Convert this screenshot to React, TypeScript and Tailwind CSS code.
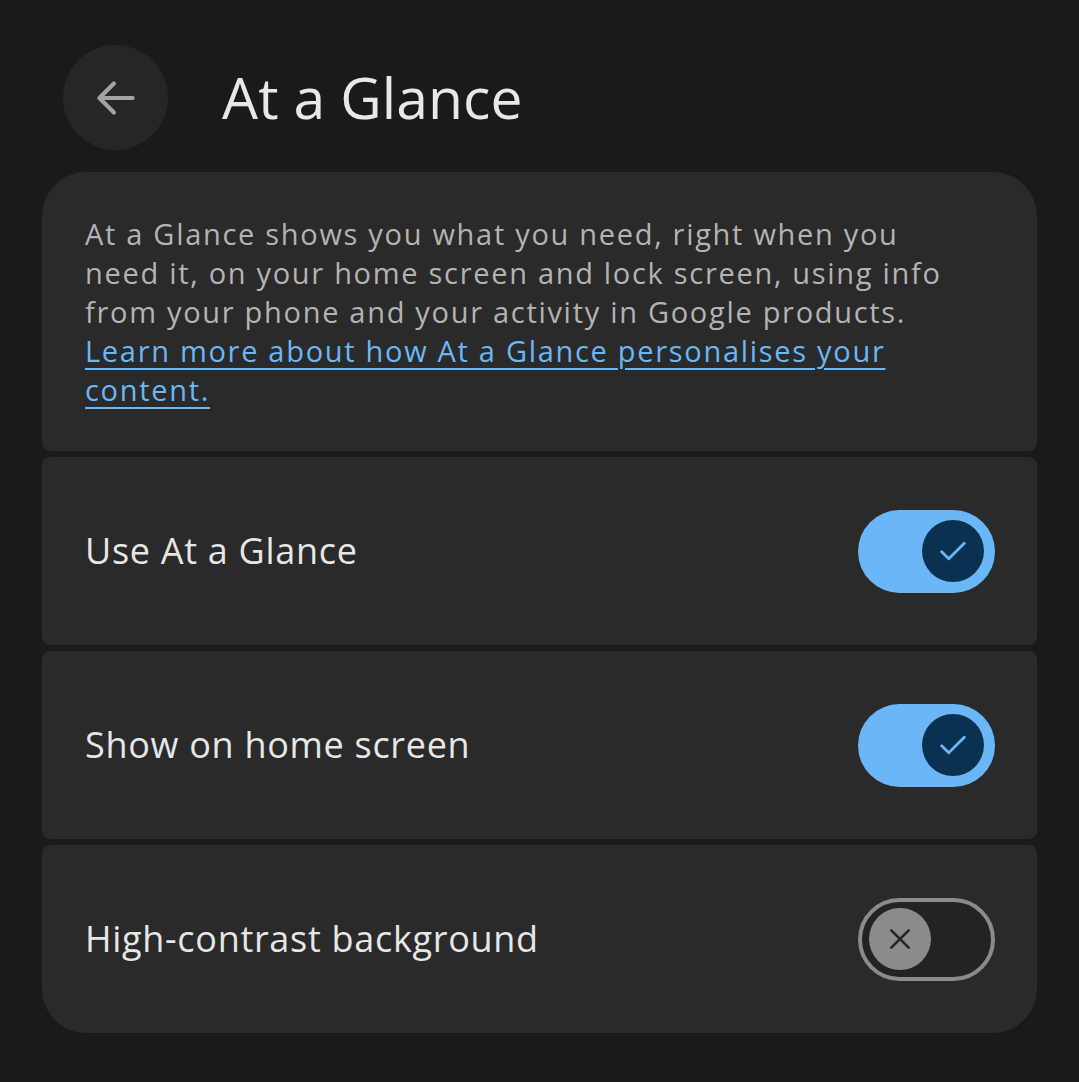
import React from "react";

function ToggleOn() {
  return (
    <div className="relative flex h-[83px] w-[137px] items-center justify-end rounded-full bg-[#6ab6f6] pr-[11px]">
      <div className="flex h-[62px] w-[62px] items-center justify-center rounded-full bg-[#0b3150]">
        <svg width="34" height="34" viewBox="0 0 24 24" fill="none" stroke="#6ab6f6" strokeWidth="2" strokeLinecap="round" strokeLinejoin="round">
          <path d="M4 12.5l5 5L20 6.5" />
        </svg>
      </div>
    </div>
  );
}

function ToggleOff() {
  return (
    <div className="flex h-[83px] w-[137px] items-center justify-start rounded-full border-[4px] border-[#8b8b8b] bg-[#232323] pl-[7px]">
      <div className="flex h-[62px] w-[62px] items-center justify-center rounded-full bg-[#8b8b8b]">
        <svg width="32" height="32" viewBox="0 0 24 24" fill="none" stroke="#262626" strokeWidth="2" strokeLinecap="round">
          <path d="M5.5 5.5l13 13M18.5 5.5l-13 13" />
        </svg>
      </div>
    </div>
  );
}

function Row({ label, on, last }: { label: string; on: boolean; last?: boolean }) {
  return (
    <div
      className={`flex h-[188px] items-center justify-between bg-[#2a2a2a] pl-[43px] pr-[42px] ${
        last ? "rounded-t-[8px] rounded-b-[44px]" : "rounded-[8px]"
      }`}
    >
      <span className="text-[36px] leading-none tracking-[0.7px] text-[#e6e6e6]">{label}</span>
      {on ? <ToggleOn /> : <ToggleOff />}
    </div>
  );
}

export default function App() {
  return (
    <div
      className="min-h-[1082px] w-full bg-[#1a1a1a] px-[42px] pt-[45px]"
      style={{ fontFamily: '"Open Sans", "Noto Sans", sans-serif' }}
    >
      <div className="flex items-center pl-[21px]">
        <div className="flex h-[105px] w-[105px] items-center justify-center rounded-full bg-[#262626]">
          <svg width="50" height="50" viewBox="0 0 24 24" fill="none" stroke="#a3a3a3" strokeWidth="2" strokeLinecap="round" strokeLinejoin="round">
            <path d="M20 12H4.5M11 5l-7 7 7 7" />
          </svg>
        </div>
        <h1 className="ml-[54px] text-[57px] leading-none tracking-[0.1px] text-[#e8e8e8]">At a Glance</h1>
      </div>

      <div className="mt-[22px] flex flex-col gap-[6px]">
        <div className="rounded-t-[44px] rounded-b-[8px] bg-[#2a2a2a] pb-[42px] pl-[43px] pr-[10px] pt-[42px]">
          <p className="whitespace-nowrap text-[29px] leading-[39px] tracking-[1.7px] text-[#b3b3b3]">
            At a Glance shows you what you need, right when you
            <br />
            need it, on your home screen and lock screen, using info
            <br />
            from your phone and your activity in Google products.
            <br />
            <a className="text-[#6cb6f2] underline decoration-[2px] underline-offset-[6px]">
              Learn more about how At a Glance personalises your
              <br />
              content.
            </a>
          </p>
        </div>
        <Row label="Use At a Glance" on />
        <Row label="Show on home screen" on />
        <Row label="High-contrast background" on={false} last />
      </div>
    </div>
  );
}
